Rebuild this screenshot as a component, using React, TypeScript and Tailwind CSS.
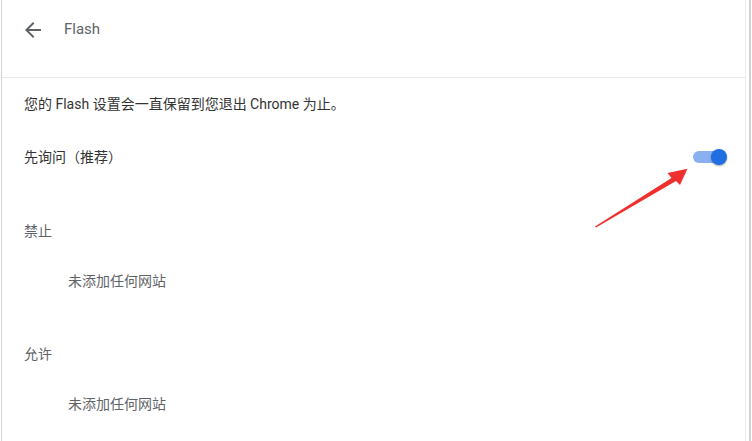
import React from "react";

export default function App() {
  return (
    <div
      className="relative w-[752px] h-[441px] bg-white flex overflow-hidden"
      style={{ fontFamily: '"Roboto", "Noto Sans CJK SC", sans-serif' }}
    >
      <div className="ml-[1px] w-[745px] h-full border-l border-[#d4d4d4] border-r border-r-[#ededed] flex flex-col">
        <div className="h-[78px] border-b border-[#e6e6e6]">
          <div className="h-[59px] flex items-center pl-[19px]">
            <svg width="24" height="24" viewBox="0 0 24 24" className="text-[#5f6368]">
              <path
                d="M20 11H7.83l5.59-5.59L12 4l-8 8 8 8 1.41-1.41L7.83 13H20v-2z"
                fill="currentColor"
              />
            </svg>
            <span className="ml-[19px] text-[15px] text-[#5f6368]">Flash</span>
          </div>
        </div>
        <div className="pl-[22px] pr-[18px] text-[14px] leading-[20px]">
          <div className="mt-[16px] text-[#333333]">您的 Flash 设置会一直保留到您退出 Chrome 为止。</div>
          <div className="mt-[33px] flex items-center justify-between h-[20px]">
            <span className="text-[#333333]">先询问（推荐）</span>
            <div className="relative w-[34px] h-[16px] flex items-center">
              <div className="w-[28px] h-[12px] rounded-full bg-[#8ab0f2]" />
              <div className="absolute right-0 top-0 w-[16px] h-[16px] rounded-full bg-[#1f6fe3] shadow-[0_1px_2px_rgba(0,0,0,0.35)]" />
            </div>
          </div>
          <div className="mt-[54px] text-[#5f6368]">禁止</div>
          <div className="mt-[30px] pl-[44px] text-[#5f6368]">未添加任何网站</div>
          <div className="mt-[53px] text-[#5f6368]">允许</div>
          <div className="mt-[30px] pl-[44px] text-[#5f6368]">未添加任何网站</div>
        </div>
      </div>
      <div className="ml-[3px] w-[2px] h-full bg-[#d2d2d2]" />
      <svg
        className="absolute left-0 top-0 pointer-events-none"
        width="752"
        height="441"
        viewBox="0 0 752 441"
      >
        <polygon
          points="595,226.5 671.5,178 667.5,173 687.5,168.8 680,185 676,181 596,227.5"
          fill="#f0302f"
        />
      </svg>
    </div>
  );
}
